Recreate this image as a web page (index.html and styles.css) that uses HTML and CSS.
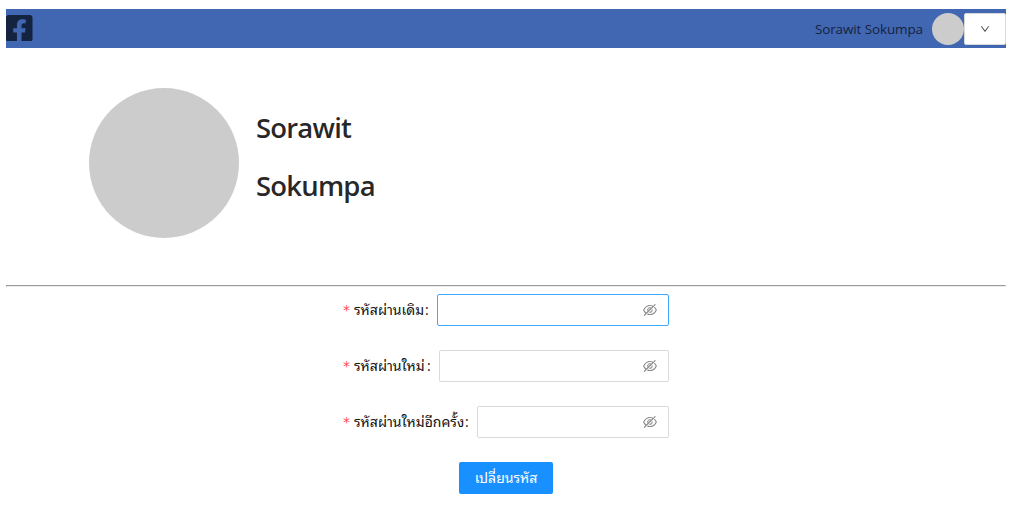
FILE: index.html
```html
<!DOCTYPE html>
<html lang="th">
<head>
<meta charset="utf-8">
<title>เปลี่ยนรหัส</title>
<link rel="stylesheet" href="styles.css">
</head>
<body>
<svg class="defs" width="0" height="0">
  <symbol id="eye-off" viewBox="64 64 896 896">
    <path d="M942.2 486.2Q889.47 375.11 816.7 305l-50.88 50.88C807.31 395.53 843.45 447.4 874.7 512 791.5 684.2 673.4 766 512 766q-72.67 0-133.87-22.38L323 798.75Q408 838 512 838q288.3 0 430.2-300.3a60.29 60.29 0 000-51.5zm-63.57-320.64L836 122.88a8 8 0 00-11.32 0L715.31 232.2Q624.86 186 512 186q-288.3 0-430.2 300.3a60.3 60.3 0 000 51.5q56.69 119.4 136.5 191.41L112.48 835a8 8 0 000 11.31L155.17 889a8 8 0 0011.31 0l712.15-712.12a8 8 0 000-11.32zM149.3 512C232.6 339.8 350.7 258 512 258c54.54 0 104.13 9.36 149.12 28.39l-70.3 70.3a176 176 0 00-238.13 238.13l-83.42 83.42C223.1 637.49 183.3 582.28 149.3 512zm246.7 0a112.11 112.11 0 01146.2-106.69L401.31 546.2A112 112 0 01396 512z"/>
    <path d="M508 624c-3.46 0-6.87-.16-10.25-.47l-52.82 52.82a176.09 176.09 0 00227.42-227.42l-52.82 52.82c.31 3.38.47 6.79.47 10.25a111.94 111.94 0 01-112 112z"/>
  </symbol>
</svg>
<header class="topbar">
  <svg class="logo" viewBox="0 32 448 448"><path d="M400 32H48A48 48 0 0 0 0 80v352a48 48 0 0 0 48 48h137.25V327.69h-63V256h63v-54.64c0-62.15 37-96.48 93.67-96.48 27.14 0 55.52 4.84 55.52 4.84v61h-31.27c-30.81 0-40.42 19.12-40.42 38.73V256h68.78l-11 71.69h-57.78V480H400a48 48 0 0 0 48-48V80a48 48 0 0 0-48-48z"/></svg>
  <div class="account">
    <span class="account-name">Sorawit Sokumpa</span>
    <span class="avatar avatar-small"></span>
    <button class="menu-button" type="button"><svg viewBox="64 64 896 896"><path d="M884 256h-75c-5.1 0-9.9 2.5-12.9 6.6L512 654.2 227.9 262.6c-3-4.1-7.8-6.6-12.9-6.6h-75c-6.5 0-10.3 7.4-6.5 12.7l352.6 486.1c12.8 17.6 39 17.6 51.7 0l352.6-486.1c3.9-5.3.1-12.7-6.4-12.7z"/></svg></button>
  </div>
</header>
<section class="profile">
  <span class="avatar avatar-large"></span>
  <div class="names">
    <h1>Sorawit</h1>
    <h1>Sokumpa</h1>
  </div>
</section>
<hr>
<form class="password-form">
  <div class="row">
    <label class="label-old"><i>*</i><span>รหัสผ่านเดิม</span><b>:</b></label>
    <div class="field focused"><svg><use href="#eye-off"/></svg></div>
  </div>
  <div class="row">
    <label class="label-new"><i>*</i><span>รหัสผ่านใหม่</span><b>:</b></label>
    <div class="field"><svg><use href="#eye-off"/></svg></div>
  </div>
  <div class="row">
    <label class="label-repeat"><i>*</i><span>รหัสผ่านใหม่อีกครั้ง</span><b>:</b></label>
    <div class="field"><svg><use href="#eye-off"/></svg></div>
  </div>
  <button class="submit" type="button">เปลี่ยนรหัส</button>
</form>
</body>
</html>
```
FILE: styles.css
```css
* { box-sizing: border-box; }
body {
  margin: 0;
  padding: 9px 6px 0;
  background: #fff;
  color: rgba(0, 0, 0, .85);
  font: 14px/22px "Open Sans", "Noto Sans", "Noto Sans Thai Looped", "Noto Looped Thai", Loma, Waree, Garuda, "Tlwg Typo", sans-serif;
}
.defs { position: absolute; }
.topbar {
  display: flex;
  align-items: center;
  justify-content: space-between;
  height: 39px;
  background: #4267b2;
}
.logo { width: 26.5px; height: 26.5px; margin-bottom: 1px; fill: #14233f; }
.account { display: flex; align-items: center; }
.account-name { margin-right: 9px; font-size: 13.5px; letter-spacing: -.12px; color: #14233f; }
.avatar { border-radius: 50%; background: #ccc; }
.avatar-small { width: 32px; height: 32px; }
.menu-button {
  display: grid;
  place-items: center;
  width: 42px;
  height: 32px;
  padding: 0;
  border: 1px solid #d9d9d9;
  border-radius: 2px;
  background: #fff;
}
.menu-button svg { width: 10px; height: 10px; fill: #444; }
.profile {
  display: flex;
  gap: 17px;
  height: 237px;
  padding: 40px 0 0 83px;
}
hr {
  height: 2px;
  margin: 0;
  border: 1px solid;
  border-color: #999 #eee #eee #999;
}
.avatar-large { width: 150px; height: 150px; }
.names { padding-top: 21px; }
.names h1 {
  margin: 0 0 20px;
  font-size: 27.5px;
  line-height: 38px;
  font-weight: 600;
  letter-spacing: -.8px;
}
.password-form {
  display: flex;
  flex-direction: column;
  width: 326px;
  margin: 7px 0 0 337px;
}
.row { display: flex; align-items: center; height: 32px; margin-bottom: 24px; }
label { display: flex; flex: none; line-height: 24px; white-space: nowrap; color: #111; }
label i { width: 11px; color: #ff4d4f; font: 14px/24px "DejaVu Sans", sans-serif; }
label span { flex: 1; }
label b { width: 8px; margin-right: 4px; font-weight: 400; }
.label-old { width: 94px; }
.label-new { width: 96px; }
.label-repeat { width: 134px; }
.field {
  display: flex;
  flex: 1;
  align-items: center;
  justify-content: flex-end;
  height: 32px;
  padding-right: 11px;
  border: 1px solid #d9d9d9;
  border-radius: 2px;
}
.focused { border-color: #40a9ff; }
.field svg { width: 14px; height: 14px; fill: #8c8c8c; }
.submit {
  align-self: center;
  width: 94px;
  height: 32px;
  padding: 0;
  border: 0;
  border-radius: 2px;
  background: #1890ff;
  color: #fff;
  font: inherit;
  white-space: nowrap;
}
```
